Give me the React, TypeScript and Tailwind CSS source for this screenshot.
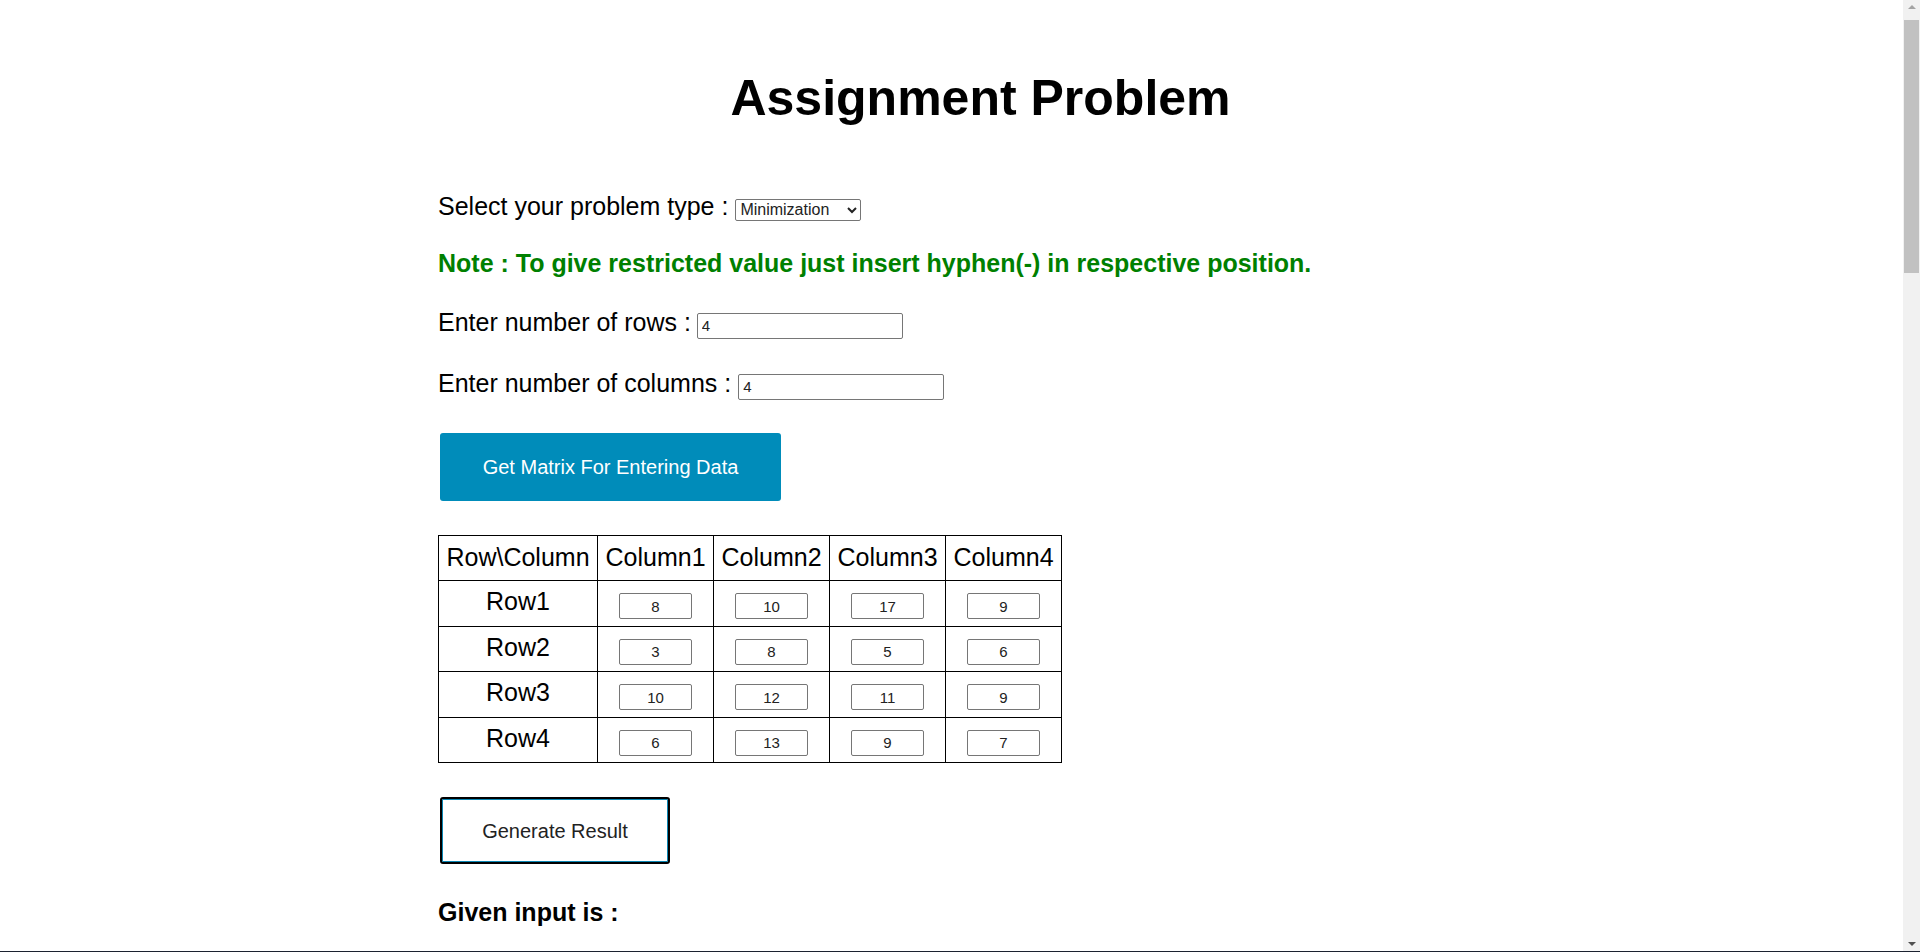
import { useState } from 'react';

const initialMatrix = [
  ['8', '10', '17', '9'],
  ['3', '8', '5', '6'],
  ['10', '12', '11', '9'],
  ['6', '13', '9', '7'],
];

const font = { fontFamily: '"Liberation Sans", Arial, sans-serif' };

export default function App() {
  const [type, setType] = useState('min');
  const [rows, setRows] = useState('4');
  const [cols, setCols] = useState('4');
  const [matrix, setMatrix] = useState(initialMatrix);

  const updateCell = (r: number, c: number, v: string) => {
    setMatrix((m) => m.map((row, i) => (i === r ? row.map((x, j) => (j === c ? v : x)) : row)));
  };

  return (
    <div className="min-h-[6290px] bg-white text-black" style={font}>
      <div className="ml-[438px] w-[1085px] pt-[70px]">
        <h1 className="text-center text-[50px] font-bold leading-[57px]">Assignment Problem</h1>

        <div className="mt-[65px] h-[28px] text-[25px] leading-[28px] whitespace-nowrap">
          Select your problem type :{' '}
          <select
            value={type}
            onChange={(e) => setType(e.target.value)}
            className="h-[22px] w-[126px] rounded-[2px] border border-[#767676] bg-white text-[16px] leading-[18px] text-[#222]"
            style={font}
          >
            <option value="min">Minimization</option>
            <option value="max">Maximization</option>
          </select>
        </div>

        <div className="mt-[29px] h-[28px] text-[25px] font-bold leading-[28px] whitespace-nowrap text-[#008000]">
          Note : To give restricted value just insert hyphen(-) in respective position.
        </div>

        <div className="mt-[31px] h-[28px] text-[25px] leading-[28px] whitespace-nowrap">
          Enter number of rows :{' '}
          <input
            value={rows}
            onChange={(e) => setRows(e.target.value)}
            className="-ml-px h-[26px] w-[206px] rounded-[2px] border border-[#767676] px-[4px] text-[15px] leading-[17px] text-[#222] outline-none"
            style={font}
          />
        </div>

        <div className="mt-[33px] h-[28px] text-[25px] leading-[28px] whitespace-nowrap">
          Enter number of columns :{' '}
          <input
            value={cols}
            onChange={(e) => setCols(e.target.value)}
            className="h-[26px] w-[206px] rounded-[2px] border border-[#767676] px-[4px] text-[15px] leading-[17px] text-[#222] outline-none"
            style={font}
          />
        </div>

        <button
          className="ml-[2px] mt-[36px] block h-[68px] w-[341px] rounded-[3px] bg-[#008CBA] text-[20px] text-white"
          style={font}
        >
          Get Matrix For Entering Data
        </button>

        <table className="mt-[34px] border-collapse text-[25px]">
          <thead>
            <tr className="h-[45px]">
              <th className="w-[159px] border border-black font-normal">Row\Column</th>
              {[1, 2, 3, 4].map((c) => (
                <th key={c} className="w-[116px] border border-black font-normal">
                  Column{c}
                </th>
              ))}
            </tr>
          </thead>
          <tbody>
            {matrix.map((row, r) => (
              <tr key={r} className="h-[45.5px]">
                <td className="border border-black pb-[3px] text-center">Row{r + 1}</td>
                {row.map((v, c) => (
                  <td key={c} className="border border-black text-center align-middle">
                    <input
                      value={v}
                      onChange={(e) => updateCell(r, c, e.target.value)}
                      className="h-[26px] w-[73px] rounded-[2px] border border-[#767676] text-center text-[15px] leading-[17px] text-[#222] outline-none"
                      style={font}
                    />
                  </td>
                ))}
              </tr>
            ))}
          </tbody>
        </table>

        <button
          className="ml-[2px] mt-[34px] block h-[67px] w-[230px] rounded-[3px] border-2 border-black bg-white text-[20px] text-[#222] shadow-[inset_0_0_0_1px_#0a86b3]"
          style={font}
        >
          Generate Result
        </button>

        <div className="mt-[34px] h-[28px] text-[25px] font-bold leading-[28px]">Given input is :</div>
      </div>

      {/* window scrollbar from the screenshot */}
      <div className="fixed right-0 top-0 flex h-[951px] w-[17px] flex-col items-center bg-[#f1f1f1]">
        <div className="mt-[5px] h-0 w-0 border-x-[4px] border-b-[4px] border-x-transparent border-b-[#a3a3a3]" />
        <div className="mt-[11px] h-[253px] w-[15px] bg-[#c1c1c1]" />
        <div className="mt-auto mb-[5px] h-0 w-0 border-x-[4px] border-t-[4px] border-x-transparent border-t-[#505050]" />
      </div>
      <div className="fixed bottom-0 left-0 h-px w-full bg-[#1c2230]" />
    </div>
  );
}
